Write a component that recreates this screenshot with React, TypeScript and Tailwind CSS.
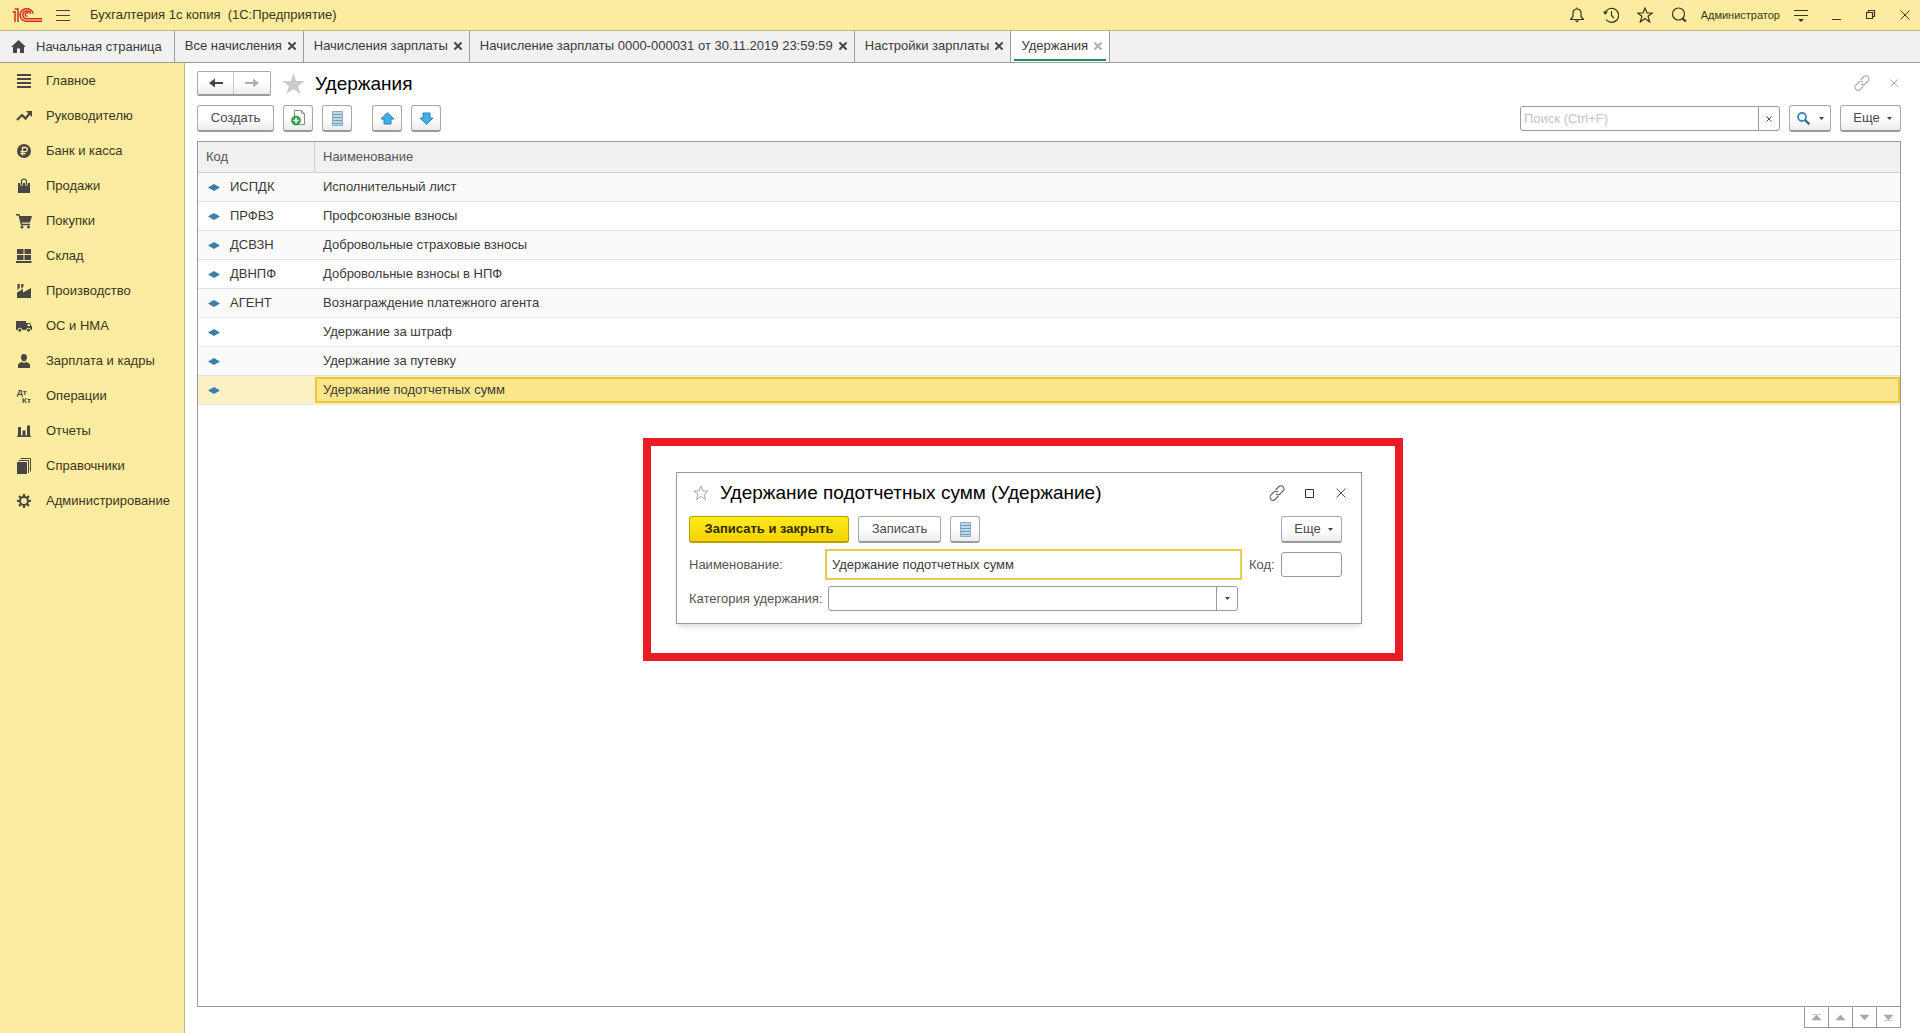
import type { ReactNode } from "react";

const BUTTON =
  "flex h-[27px] shrink-0 items-center justify-center rounded-[3px] border border-[#a9a9a9] border-b-2 border-b-[#9a9a9a] bg-linear-to-b from-white from-50% to-[#ececec] text-[#4a4a4a]";

function Svg({ w, h, children, className }: { w: number; h: number; children: ReactNode; className?: string }) {
  return (
    <svg width={w} height={h} viewBox={`0 0 ${w} ${h}`} fill="none" className={className} aria-hidden="true">
      {children}
    </svg>
  );
}

function Logo() {
  return (
    <svg width="31" height="16" viewBox="0 0 93 48" fill="none" stroke="#d42a20" strokeWidth="4.5" aria-hidden="true">
      <path d="M2 14h7v31M8 6h10v39" />
      <path d="M64 20A20 19 0 1 0 45 43H90" />
      <path d="M56 20A12 11.500 0 1 0 45 35H90" />
      <path d="M49 20a5 5 0 1 0-3 7" strokeWidth="4" />
    </svg>
  );
}

function Caret() {
  return (
    <Svg w={5} h={3}>
      <path d="M0 0h5L2.500 3z" fill="#444" />
    </Svg>
  );
}

function Cross({ size, width = 1 }: { size: number; width?: number }) {
  return (
    <svg width={size} height={size} viewBox="0 0 10 10" fill="none" stroke="currentColor" strokeWidth={(width * 10) / size} aria-hidden="true">
      <path d="M.5.5l9 9M9.500.5l-9 9" />
    </svg>
  );
}

function LinkIcon() {
  return (
    <Svg w={16} h={16}>
      <g stroke="currentColor" strokeWidth="1.100" strokeLinecap="round">
        <path d="M7 4.500 9.800 1.700a2.900 2.900 0 0 1 4.300 4.200L11.200 8.800a2.900 2.900 0 0 1-3.700.4" />
        <path d="M9 11.500 6.200 14.300a2.900 2.900 0 0 1-4.300-4.200L4.800 7.200a2.900 2.900 0 0 1 3.700-.4" />
      </g>
    </Svg>
  );
}

function ListIcon() {
  return (
    <Svg w={11} h={15}>
      <path d="M.5.500h10v14h-10z" fill="#bcd9ea" stroke="#8fabbd" />
      <path d="M1 3.500h9M1 6.500h9M1 9.500h9M1 12.500h9" stroke="#6f9bb8" />
    </Svg>
  );
}

function BigArrow({ down = false }: { down?: boolean }) {
  return (
    <Svg w={15} h={13} className={down ? "rotate-180" : ""}>
      <path d="M7.500.800 14 7h-3v5H4V7H1z" fill="#41b0ea" stroke="#2b83b4" strokeLinejoin="round" />
    </Svg>
  );
}

const MENU: { label: string; icon: ReactNode }[] = [
  { label: "Главное", icon: <path d="M1 2h14M1 6h14M1 10h14M1 14h14" stroke="#4a4643" strokeWidth="2" /> },
  {
    label: "Руководителю",
    icon: (
      <>
        <path d="M1 12l5-5 3.500 3.500L14 5" stroke="#4a4643" strokeWidth="2.200" />
        <path d="M10 3h6v6z" fill="#4a4643" />
      </>
    ),
  },
  {
    label: "Банк и касса",
    icon: (
      <>
        <circle cx="8" cy="8" r="7" fill="#4a4643" />
        <path d="M6.500 12.500V4.500h2.700a2 2 0 0 1 0 4.200H4.500M4.500 10.700h5" stroke="#fbed9e" strokeWidth="1.300" />
      </>
    ),
  },
  {
    label: "Продажи",
    icon: (
      <>
        <path d="M2 5h12v10H2z" fill="#4a4643" />
        <path d="M5.500 7.500V4a2.500 2.500 0 0 1 5 0v3.500" stroke="#fbed9e" strokeWidth="2.600" />
        <path d="M5.500 7V3.500a2.500 2.500 0 0 1 5 0V7" stroke="#4a4643" strokeWidth="1.200" />
      </>
    ),
  },
  {
    label: "Покупки",
    icon: (
      <>
        <path d="M0 1.700h3l2.500 9.800H14" stroke="#4a4643" strokeWidth="1.400" />
        <path d="M3.500 3H16l-2 6.500H5z" fill="#4a4643" />
        <circle cx="6" cy="14" r="1.500" fill="#4a4643" />
        <circle cx="12.500" cy="14" r="1.500" fill="#4a4643" />
      </>
    ),
  },
  {
    label: "Склад",
    icon: <path d="M1 1h6.500v5H1zM8.500 1H15v5H8.500zM1 7h6.500v5H1zM8.500 7H15v5H8.500zM0 13h15.500v2H0z" fill="#4a4643" />,
  },
  {
    label: "Производство",
    icon: <path d="M1 15V9.500L7 6v3.500L15 5v10zM1.500 1h2.300v3.500l-2.300 3zM5.200 1h2.300v2.500L5.200 6z" fill="#4a4643" />,
  },
  {
    label: "ОС и НМА",
    icon: (
      <>
        <path d="M0 3h10v9H0zM10 5h3.800L16 8.500V12h-6z" fill="#4a4643" />
        <path d="M11.500 6h1.900l1.200 2h-3.100z" fill="#fbed9e" />
        <circle cx="3.800" cy="12.200" r="2" fill="#4a4643" stroke="#fbed9e" />
        <circle cx="12.500" cy="12.200" r="2" fill="#4a4643" stroke="#fbed9e" />
      </>
    ),
  },
  {
    label: "Зарплата и кадры",
    icon: (
      <>
        <path d="M8 1c2.200 0 3 1.500 3 3.300S9.800 8.500 8 8.500 5 6.200 5 4.300 5.800 1 8 1z" fill="#4a4643" />
        <path d="M2 15v-3c0-1.500 2-2.500 4-3l2 1 2-1c2 .5 4 1.500 4 3v3z" fill="#4a4643" />
      </>
    ),
  },
  {
    label: "Операции",
    icon: (
      <g fill="#4a4643" fontFamily="Liberation Sans, sans-serif" fontWeight="700" fontSize="8">
        <text x="1" y="7">Дт</text>
        <text x="6" y="15">Кт</text>
      </g>
    ),
  },
  {
    label: "Отчеты",
    icon: <path d="M1 12.500h14v1.500H1zM2 4h3v9H2zM6.500 7.500h3V13h-3zM11 2.500h3V13h-3z" fill="#4a4643" />,
  },
  {
    label: "Справочники",
    icon: (
      <>
        <path d="M1 4h10v12H1z" fill="#4a4643" />
        <path d="M2.500 2.500h10V15M4.500.500h10v13" stroke="#4a4643" />
      </>
    ),
  },
  {
    label: "Администрирование",
    icon: (
      <g stroke="#4a4643">
        <circle cx="8" cy="8" r="4" strokeWidth="2" />
        <path d="M8 1v2.500M8 12.500V15M1 8h2.500M12.500 8H15M3.050 3.050l1.800 1.800M11.150 11.150l1.800 1.800M3.050 12.950l1.800-1.800M11.150 4.850l1.800-1.800" strokeWidth="2.200" />
      </g>
    ),
  },
];

const TABS = [
  "Все начисления",
  "Начисления зарплаты",
  "Начисление зарплаты 0000-000031 от 30.11.2019 23:59:59",
  "Настройки зарплаты",
  "Удержания",
];

const ROWS: [string, string][] = [
  ["ИСПДК", "Исполнительный лист"],
  ["ПРФВЗ", "Профсоюзные взносы"],
  ["ДСВЗН", "Добровольные страховые взносы"],
  ["ДВНПФ", "Добровольные взносы в НПФ"],
  ["АГЕНТ", "Вознаграждение платежного агента"],
  ["", "Удержание за штраф"],
  ["", "Удержание за путевку"],
  ["", "Удержание подотчетных сумм"],
];

const PAGER: [string, string][] = [
  ["В начало", "M0 .5h9M4.500 1 9 6H0z"],
  ["Вверх", "M4.500 1 9 6H0z"],
  ["Вниз", "M0 1h9L4.500 6z"],
  ["В конец", "M0 1h9L4.500 6zM0 6.500h9"],
];

function TitleBar() {
  return (
    <header className="flex h-[31px] items-center border-b border-[#bdb67a] bg-[#fcec9f] pl-3 pr-2.5 text-[#3c3620]">
      <Logo />
      <button aria-label="Главное меню" className="ml-3">
        <Svg w={16} h={12}>
          <path d="M1 1.500h14M1 6.500h14M1 11.500h14" stroke="#4a4530" />
        </Svg>
      </button>
      <span className="ml-[19px] whitespace-pre">Бухгалтерия 1с копия  (1С:Предприятие)</span>
      <div className="ml-auto flex items-center">
        <div className="flex items-center gap-[18px]">
          <button aria-label="Уведомления">
            <Svg w={16} h={16}>
              <path d="M1.500 12.500h13L12 9.500V6c0-2.500-1.700-4-4-4S4 3.500 4 6v3.500zM8 .5V2" stroke="currentColor" strokeWidth="1.200" strokeLinejoin="round" />
              <path d="M5.500 13.500h5L8 15.500z" fill="currentColor" />
            </Svg>
          </button>
          <button aria-label="История">
            <Svg w={16} h={16}>
              <path d="M2 6A7 7 0 1 1 3 12.500M8.500 4v4.500l2.500 2.500" stroke="currentColor" strokeWidth="1.200" />
              <path d="M0 4.500h5L2.200 8z" fill="currentColor" />
            </Svg>
          </button>
          <button aria-label="Избранное">
            <Svg w={16} h={16}>
              <path d="M8 1l2 5h5.200l-4.100 3.300L12.700 15 8 11.600 3.300 15l1.600-5.700L.8 6H6z" stroke="currentColor" strokeWidth="1.200" />
            </Svg>
          </button>
          <button aria-label="Поиск">
            <Svg w={16} h={16}>
              <circle cx="7.500" cy="7" r="6" stroke="currentColor" strokeWidth="1.200" />
              <path d="M11.500 11.500l3.500 3" stroke="currentColor" strokeWidth="2.200" />
            </Svg>
          </button>
        </div>
        <span className="ml-3.5 text-[11px]">Администратор</span>
        <button aria-label="Настройки" className="ml-3.5">
          <Svg w={14} h={14}>
            <path d="M0 2.500h14M0 7.500h14" stroke="currentColor" />
            <path d="M4 11h6l-3 3z" fill="currentColor" />
          </Svg>
        </button>
        <button aria-label="Свернуть" className="ml-6">
          <Svg w={10} h={10}>
            <path d="M0 9.500h9" stroke="currentColor" />
          </Svg>
        </button>
        <button aria-label="Восстановить" className="ml-6">
          <Svg w={10} h={10}>
            <path d="M.5 2.500h6v6h-6zM2.500 2.500v-2h6v6h-2" stroke="currentColor" strokeWidth="1.200" />
          </Svg>
        </button>
        <button aria-label="Закрыть" className="ml-6">
          <Cross size={10} width={1} />
        </button>
      </div>
    </header>
  );
}

function TabBar() {
  return (
    <nav className="flex h-8 border-b border-[#9d9d98] bg-[#f1f1f1] text-[#3a3a3a]">
      <button className="flex items-center border-r border-[#9d9d98] pl-[11px] pr-3">
        <Svg w={15} h={13}>
          <path d="M7.500 0 15 7h-2v6H9V8.500H6V13H2V7H0z" fill="#4a4643" />
        </Svg>
        <span className="ml-2.5">Начальная страница</span>
      </button>
      {TABS.map((tab, i) => {
        const active = i === TABS.length - 1;
        return (
          <div key={tab} className={`flex border-r border-[#9d9d98] px-[3px] ${active ? "bg-white" : ""}`}>
            <div className={`mb-px flex items-center gap-1.5 border-b-2 pl-[7px] pr-1 pt-0.5 ${active ? "border-[#1f8a5b]" : "border-transparent"}`}>
              <button>{tab}</button>
              <button aria-label={`Закрыть ${tab}`} className={active ? "text-[#b0b0a8]" : "text-[#4a4643]"}>
                <Cross size={8} width={2} />
              </button>
            </div>
          </div>
        );
      })}
    </nav>
  );
}

function Sidebar() {
  return (
    <aside className="w-[185px] shrink-0 border-r border-[#bdb98f] bg-[#fcec9f] text-[#3c3620]">
      {MENU.map((item) => (
        <a key={item.label} href="#" className="flex h-[35px] items-center gap-3.5 pl-4">
          <Svg w={16} h={16}>{item.icon}</Svg>
          <span>{item.label}</span>
        </a>
      ))}
    </aside>
  );
}

function ListHeader() {
  return (
    <div className="flex h-[25px] items-center">
      <div className="flex h-[25px] rounded-[2px] border border-[#a9a9a9] border-b-2 border-b-[#9a9a9a] bg-linear-to-b from-white from-50% to-[#ececec]">
        <button aria-label="Назад" className="flex w-9 items-center justify-center border-r border-[#c8c8c8]">
          <Svg w={14} h={10}>
            <path d="M0 5l6-4.500V4h8v2H6v3.500z" fill="#444" />
          </Svg>
        </button>
        <button aria-label="Вперед" className="flex w-9 items-center justify-center">
          <Svg w={14} h={10}>
            <path d="M14 5L8 .5V4H0v2h8v3.500z" fill="#b0b0b0" />
          </Svg>
        </button>
      </div>
      <button aria-label="В избранное" className="ml-[11px]">
        <Svg w={23} h={21}>
          <path d="M11.500 0l2.700 8H23l-7 5 2.700 8-7.200-5-7.200 5L7 13 0 8h8.800z" fill="#cbcbcb" />
        </Svg>
      </button>
      <h1 className="ml-2.5 text-[19px] leading-6 text-black">Удержания</h1>
      <div className="ml-auto flex items-center gap-5 pb-0.5 pr-[3px] text-[#a5a5a5]">
        <button aria-label="Ссылка"><LinkIcon /></button>
        <button aria-label="Закрыть форму"><Cross size={8} /></button>
      </div>
    </div>
  );
}

function Toolbar() {
  return (
    <div className="mt-[9px] flex items-center">
      <button className={`${BUTTON} w-[77px]`}>Создать</button>
      <button aria-label="Скопировать" className={`${BUTTON} ml-[9px] w-[30px]`}>
        <Svg w={15} h={16}>
          <path d="M3.500.500h7l3 3v11h-10z" fill="#fff" stroke="#8a8a8a" />
          <path d="M10.500.500v3h3" stroke="#8a8a8a" />
          <circle cx="5" cy="10.500" r="4.500" fill="#35a04a" stroke="#22803a" strokeWidth=".6" />
          <path d="M5 7.800v5.400M2.300 10.500h5.400" stroke="#fff" strokeWidth="1.500" />
        </Svg>
      </button>
      <button aria-label="Список" className={`${BUTTON} ml-[9px] w-[30px]`}><ListIcon /></button>
      <button aria-label="Переместить вверх" className={`${BUTTON} ml-5 w-[30px]`}><BigArrow /></button>
      <button aria-label="Переместить вниз" className={`${BUTTON} ml-[9px] w-[30px]`}><BigArrow down /></button>
      <div className="ml-auto flex h-[25px] w-[260px] overflow-hidden rounded-[3px] border border-[#9a9a9a] bg-white">
        <input aria-label="Поиск" placeholder="Поиск (Ctrl+F)" className="min-w-0 flex-1 pl-[3px] outline-none placeholder:text-[#c4c4c4]" />
        <button aria-label="Очистить" className="flex w-[21px] items-center justify-center border-l border-[#9a9a9a] text-[#555]">
          <Cross size={6} width={1} />
        </button>
      </div>
      <button aria-label="Найти" className={`${BUTTON} ml-[9px] w-[42px] gap-[9px]`}>
        <Svg w={13} h={13}>
          <circle cx="5" cy="5" r="4" stroke="#3a86b8" strokeWidth="1.800" />
          <path d="M8 8l4.300 4.300" stroke="#2c6a98" strokeWidth="2.300" />
        </Svg>
        <Caret />
      </button>
      <button className={`${BUTTON} ml-[9px] w-[61px] gap-[7px] pl-1`}>Еще <Caret /></button>
    </div>
  );
}

function DeductionsTable() {
  return (
    <div className="mt-[9px] flex-1 border border-[#9a9a96]">
      <table className="w-full table-fixed border-separate border-spacing-0 text-left">
        <thead>
          <tr className="h-[31px] bg-[#f1f1f1] text-[#555]">
            <th className="w-[117px] border-b border-r border-[#cfcfcf] pl-2 font-normal">Код</th>
            <th className="border-b border-[#cfcfcf] pl-2 font-normal">Наименование</th>
          </tr>
        </thead>
        <tbody>
          {ROWS.map(([code, name], i) => {
            const selected = i === ROWS.length - 1;
            const bg = selected ? "bg-[#fcf1c5]" : i % 2 ? "bg-white" : "bg-[#fafafa]";
            return (
              <tr key={name} className={`h-[29px] text-[#3a3a3a] ${bg}`}>
                <td className={`border-b p-0 ${selected ? "border-[#eee8c8]" : "border-[#e2e2e2]"}`}>
                  <div className="flex items-center gap-2.5 pl-2.5">
                    <Svg w={12} h={7}>
                      <path d="M0 3.500 6 0l6 3.500L6 7z" fill="#3a7fa8" />
                    </Svg>
                    {code}
                  </div>
                </td>
                <td className={`border-b p-0 ${selected ? "border-[#eee8c8]" : "border-[#e2e2e2]"}`}>
                  <div className={selected ? "flex h-[26px] items-center border-2 border-[#e8ca42] bg-[#fde68a] pl-1.5" : "pl-2"}>{name}</div>
                </td>
              </tr>
            );
          })}
        </tbody>
      </table>
    </div>
  );
}

function Pager() {
  return (
    <div className="-mt-px flex self-end border border-[#9a9a96]">
      {PAGER.map(([label, d], i) => (
        <button key={label} aria-label={label} className={`flex h-5 items-center justify-center border-[#9a9a96] ${i ? "w-6 border-l" : "w-[23px]"}`}>
          <Svg w={9} h={7}>
            <path d={d} fill="#a8a8a8" stroke="#a8a8a8" strokeWidth=".6" />
          </Svg>
        </button>
      ))}
    </div>
  );
}

function DeductionDialog() {
  return (
    <div className="absolute left-[458px] top-[375px] w-[760px] border-8 border-[#e81c24] bg-white pb-[29px] pl-[25px] pr-[33px] pt-[26px]">
      <section role="dialog" aria-labelledby="dialog-title" className="border border-[#9a9a9a] pb-3 pl-3 pr-[19px] pt-2 shadow-md">
        <div className="flex h-6 items-center">
          <button aria-label="В избранное" className="ml-1">
            <Svg w={16} h={16}>
              <path d="M8 1l1.900 5h5.200L11 9.300l1.600 5.400L8 11.400l-4.600 3.300L5 9.300.9 6h5.200z" stroke="#a8a8a8" />
            </Svg>
          </button>
          <h2 id="dialog-title" className="ml-[11px] text-[19px] leading-6 text-black">Удержание подотчетных сумм (Удержание)</h2>
          <div className="ml-auto flex items-center text-[#555]">
            <button aria-label="Ссылка"><LinkIcon /></button>
            <button aria-label="Развернуть" className="ml-5">
              <Svg w={9} h={9}>
                <path d="M.5.500h8v8h-8z" stroke="#333" />
              </Svg>
            </button>
            <button aria-label="Закрыть" className="-mr-1 ml-[22px]"><Cross size={10} /></button>
          </div>
        </div>
        <div className="mt-[11px] flex gap-[9px]">
          <button className="flex h-[27px] w-40 items-center justify-center rounded-[3px] border border-b-2 border-[#b8a000] bg-linear-to-b from-[#ffea1c] to-[#f5d400] font-bold text-[#332b00]">
            Записать и закрыть
          </button>
          <button className={`${BUTTON} w-[83px]`}>Записать</button>
          <button aria-label="Список" className={`${BUTTON} w-[30px]`}><ListIcon /></button>
          <button className={`${BUTTON} ml-auto w-[61px] gap-[7px] pl-1`}>Еще <Caret /></button>
        </div>
        <div className="mt-1.5 flex items-center text-[#555]">
          <label htmlFor="name" className="w-[136px]">Наименование:</label>
          <input id="name" defaultValue="Удержание подотчетных сумм" className="h-[31px] min-w-0 flex-1 border-2 border-[#ecca4a] pl-[5px] text-[#3a3a3a] outline-none" />
          <label htmlFor="code" className="ml-[7px] w-8">Код:</label>
          <input id="code" className="h-[25px] w-[61px] rounded-[3px] border border-[#9a9a9a] px-1 outline-none" />
        </div>
        <div className="mt-1.5 flex items-center pr-[104px] text-[#555]">
          <label htmlFor="category" className="w-[139px] whitespace-nowrap">Категория удержания:</label>
          <div className="relative flex-1">
            <select id="category" className="block h-[25px] w-full appearance-none rounded-[3px] border border-[#9a9a9a] bg-white px-1 outline-none">
              <option></option>
            </select>
            <span className="pointer-events-none absolute inset-y-0 right-0 flex w-[22px] items-center justify-center border-l border-[#9a9a9a]">
              <Caret />
            </span>
          </div>
        </div>
      </section>
    </div>
  );
}

export default function App() {
  return (
    <div className="flex min-h-screen flex-col bg-white font-['Liberation_Sans',Arial,sans-serif] text-[13px] leading-4">
      <TitleBar />
      <TabBar />
      <div className="flex flex-1">
        <Sidebar />
        <main className="relative flex min-w-0 flex-1 flex-col pb-[5px] pl-3 pr-[19px] pt-2">
          <ListHeader />
          <Toolbar />
          <DeductionsTable />
          <Pager />
          <DeductionDialog />
        </main>
      </div>
    </div>
  );
}
